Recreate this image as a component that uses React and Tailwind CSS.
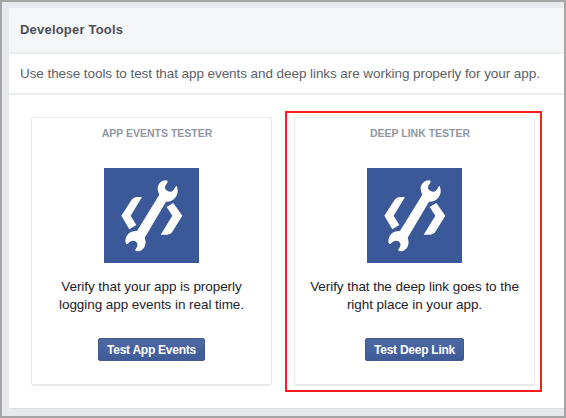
function ToolsIcon() {
  return (
    <svg viewBox="0 0 285 285" className="block size-[95px] bg-[#3b5998]" fill="#fff">
      <path d="M114 87H98Q89 87 83 95L52 143L76 184L97 171L80 143Z" />
      <path d="M188 117L208 105L235 143L206 190Q200 200 190 200H170L205 143Z" />
      <path d="M188 37C171 36 160 50 161 64Q162 73 166 80L99 189C80 187 65 200 64 218Q64 228 71 228C76 221 86 215 94 220C102 225 102 233 97 240L93 247Q98 251 107 249C122 244 129 226 122 209L186 101C204 103 220 88 221 71Q221 61 218 53C211 58 210 69 201 71C191 72 182 65 183 57C184 51 191 46 191 40Z" />
    </svg>
  );
}

function Card({ title, lines, button, buttonClass }) {
  return (
    <section className="flex h-[269px] w-[241px] flex-col items-center rounded-[3px] border-[1.5px] border-b-2 border-[#e9eaeb] bg-white">
      <h2 className="mt-[8px] pl-[11px] text-[10.5px] leading-[14px] font-bold whitespace-nowrap text-[#9197a3]">
        {title}
      </h2>
      <div className="mt-[28px]">
        <ToolsIcon />
      </div>
      <p className="mt-[15px] text-center text-[13.5px] leading-[17.5px] tracking-[-0.06px] whitespace-nowrap text-[#1d2129]">
        <span className="block">{lines[0]}</span>
        <span className="block">{lines[1]}</span>
      </p>
      <button
        className={`mt-[25px] h-[23px] rounded-[2px] border border-[#42598f] bg-linear-to-b from-[#4c69a4] to-[#3f5c9a] pt-px text-center text-[12px] leading-[20px] font-bold tracking-[-0.25px] whitespace-nowrap text-white ${buttonClass}`}
      >
        {button}
      </button>
    </section>
  );
}

export default function App() {
  return (
    <div className="h-[418px] w-[566px] overflow-hidden border-2 border-[#a5a5a5] bg-[#e8e9ec] pt-[6px] pl-[7px] font-['Liberation_Sans',Arial,sans-serif]">
      <main className="h-[401px] rounded-l-[2px] border-b border-[#dddfe2] bg-white">
        <header className="flex h-[46px] items-center rounded-tl-[2px] border-b-2 border-[#ebedef] bg-[#f5f6f8] pl-[11px]">
          <h1 className="text-[13px] font-bold tracking-[0.2px] whitespace-nowrap text-[#4b4f5c]">Developer Tools</h1>
        </header>
        <p className="flex h-[41px] items-center border-b-2 border-[#ebecee] pt-[2px] pl-[11px] text-[13.5px] tracking-[-0.07px] whitespace-nowrap text-[#5a5f68]">
          Use these tools to test that app events and deep links are working properly for your app.
        </p>
        <div className="flex pt-[16px] pl-[22px]">
          <div className="pt-[6px]">
            <Card
              title="APP EVENTS TESTER"
              lines={["Verify that your app is properly", "logging app events in real time."]}
              button="Test App Events"
              buttonClass="w-[107px]"
            />
          </div>
          <div className="ml-[13px] h-[281px] w-[257px] border-2 border-[#fc1c1c] pt-[4px] pl-[7px]">
            <Card
              title="DEEP LINK TESTER"
              lines={["Verify that the deep link goes to the", "right place in your app."]}
              button="Test Deep Link"
              buttonClass="w-[99px]"
            />
          </div>
        </div>
      </main>
    </div>
  );
}
